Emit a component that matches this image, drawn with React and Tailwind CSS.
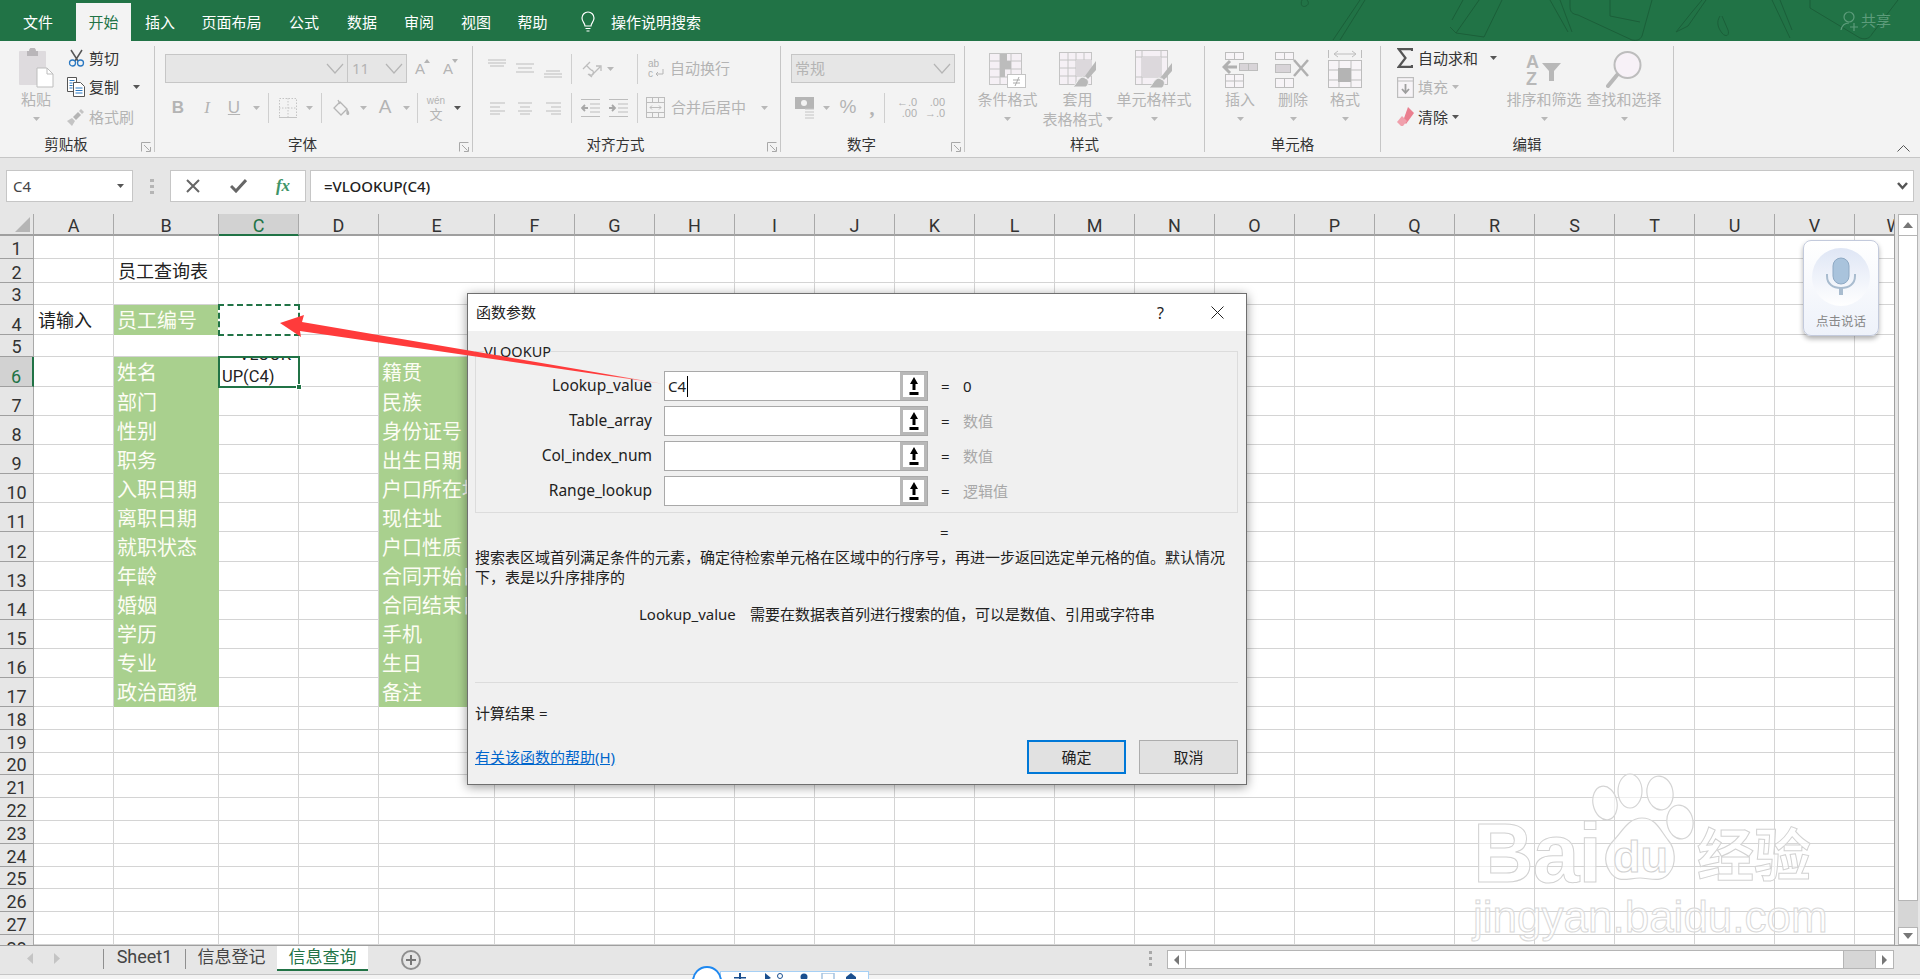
import React from 'react';

const tabs = ['文件', '开始', '插入', '页面布局', '公式', '数据', '审阅', '视图', '帮助'];
const tabBoxes = ['w-[76px]', 'w-[55px]', 'w-[58px]', 'w-[85px]', 'w-[60px]', 'w-[56px]', 'w-[58px]', 'w-[56px]', 'w-[57px]'];

const columns = ['A', 'B', 'C', 'D', 'E', 'F', 'G', 'H', 'I', 'J', 'K', 'L', 'M', 'N', 'O', 'P', 'Q', 'R', 'S', 'T', 'U', 'V', 'W'];
const rowNumbers = Array.from({ length: 28 }, (_, i) => i + 1);

const leftFields = ['姓名', '部门', '性别', '职务', '入职日期', '离职日期', '就职状态', '年龄', '婚姻', '学历', '专业', '政治面貌'];
const rightFields = ['籍贯', '民族', '身份证号', '出生日期', '户口所在地', '现住址', '户口性质', '合同开始日期', '合同结束日期', '手机', '生日', '备注'];

function Caret({ dark = false }) {
  return (
    <svg className="w-[7px] h-[4px] shrink-0" viewBox="0 0 7 4">
      <path d="M0 0h7L3.5 4z" fill={dark ? '#555' : '#b8b8b8'} />
    </svg>
  );
}

function Launcher() {
  return (
    <svg className="w-[10px] h-[10px]" viewBox="0 0 10 10" fill="none" stroke="#a8a8a8">
      <path d="M.5 9.5V.5H9.5" />
      <path d="M3 3l5.5 5.5M5 9.5h4.5V5" />
    </svg>
  );
}

function Chevron() {
  return (
    <svg className="w-[18px] h-[11px]" viewBox="0 0 18 11" fill="none" stroke="#b5b5b5" strokeWidth="1.2">
      <path d="M1 1l8 9 8-9" />
    </svg>
  );
}

function Sep({ className }) {
  return <div className={`w-px h-[30px] bg-[#cfcfcf] shrink-0 ${className}`} />;
}

function Box({ className, children }) {
  return <div className={`flex items-center justify-center shrink-0 ${className}`}>{children}</div>;
}

function Group({ className, label, labelClass, launcher, children }) {
  return (
    <div className={`h-[106px] mt-[5px] border-r border-[#c6c6c6] flex flex-col shrink-0 ${className}`}>
      <div className="h-[89px] -mt-[3px] flex shrink-0">{children}</div>
      <div className={`h-[23px] flex items-center relative pt-[2px] shrink-0 ${labelClass}`}>
        <div className="w-full text-center text-[14.5px] text-[#333]">{label}</div>
        {launcher && <div className="absolute right-[3px] top-[10px]"><Launcher /></div>}
      </div>
    </div>
  );
}

function LargeButton({ className, icon, label, second }) {
  return (
    <div className={`flex flex-col items-center shrink-0 ${className}`}>
      <div className="h-[45px] flex items-end">{icon}</div>
      <div className="h-[20px] mt-[1px] flex items-center text-[15px] text-[#b4b4b4] whitespace-nowrap">{label}</div>
      <div className="h-[20px] flex items-center gap-[3px] text-[15px] text-[#b4b4b4] whitespace-nowrap">
        {second}
        <Caret />
      </div>
    </div>
  );
}

function SmallRow({ icon, label, caret, dark, caretDark, className }) {
  return (
    <div className={`h-[29.5px] flex items-center ${className}`}>
      <div className="w-[22px] flex justify-center shrink-0">{icon}</div>
      <span className={`ml-[2px] text-[15px] whitespace-nowrap ${dark ? 'text-[#333]' : 'text-[#b4b4b4]'}`}>{label}</span>
      {caret && <div className={caret}><Caret dark={caretDark} /></div>}
    </div>
  );
}

function PasteIcon() {
  return (
    <svg className="w-[36px] h-[40px]" viewBox="0 0 36 40">
      <rect x="1" y="3" width="27" height="34" rx="1" fill="#dedbde" />
      <path d="M9 3h2a3.5 3.5 0 0 1 7 0h2v5H9z" fill="#b9b6b9" />
      <path d="M19 20h10l6 6v13H19z" fill="#fff" stroke="#bdbdbd" />
      <path d="M29 20v6h6" fill="none" stroke="#bdbdbd" />
    </svg>
  );
}

function ScissorsIcon() {
  return (
    <svg className="w-[17px] h-[18px]" viewBox="0 0 17 18" fill="none">
      <path d="M3 1l7 11M14 1L7 12" stroke="#555" strokeWidth="1.5" />
      <circle cx="4.5" cy="14" r="3" stroke="#2b79c2" strokeWidth="1.3" />
      <circle cx="12.5" cy="14" r="3" stroke="#2b79c2" strokeWidth="1.3" />
    </svg>
  );
}

function CopyIcon() {
  return (
    <svg className="w-[18px] h-[20px]" viewBox="0 0 18 20" fill="none" stroke="#555">
      <path d="M.5.5h9v14h-9z" fill="#fff" />
      <path d="M6.5 5.5h7l4 4v10h-11z" fill="#fff" />
      <path d="M2.5 3.5h5M2.5 6h3M2.5 8.5h3M2.5 11h3M8.5 11h7M8.5 13.5h7M8.5 16h7" stroke="#2b79c2" />
    </svg>
  );
}

function BrushIcon() {
  return (
    <svg className="w-[18px] h-[18px]" viewBox="0 0 18 18" fill="#c4c4c4">
      <path d="M11 4l3 3-5 5-3-3z" fill="#b4b4b4" />
      <path d="M12 3l2-2 3 3-2 2z" />
      <path d="M5 10l3 3-3 5-5-5z" />
    </svg>
  );
}

function AlignLines({ widths }) {
  return (
    <svg className="w-[18px] h-[14px]" viewBox="0 0 18 14" stroke="#bdbdbd" strokeWidth="1.2">
      <path d={widths} />
    </svg>
  );
}

function OrientIcon() {
  return (
    <svg className="w-[20px] h-[18px]" viewBox="0 0 20 18" fill="none" stroke="#bdbdbd" strokeWidth="1.3">
      <path d="M1 9l7-7M4 5l5 5M6 14l4 3M9 10c2 0 3 2 2 4s-3 1-4 0" />
      <path d="M10 15l8-8M14 6h5v5" />
    </svg>
  );
}

function IndentIcon({ reverse }) {
  return (
    <svg className="w-[19px] h-[20px]" viewBox="0 0 19 20" fill="none" stroke="#bdbdbd" strokeWidth="1.2">
      <path d="M0 1.5h19M0 18.5h19M9 6h10M9 10h10M9 14h10" />
      {reverse ? <path d="M7 10H1M4 7l-3 3 3 3" stroke="#a8a8a8" strokeWidth="1.8" /> : <path d="M0 10h6M3 7l3 3-3 3" stroke="#a8a8a8" strokeWidth="1.8" />}
    </svg>
  );
}

function BorderIcon() {
  return (
    <svg className="w-[18px] h-[20px]" viewBox="0 0 18 20" fill="none" stroke="#c4c4c4" strokeDasharray="1.5 1.5">
      <rect x=".5" y=".5" width="17" height="19" />
      <path d="M9 0v20M0 10h18" />
      <path d="M0 19.5h18" strokeDasharray="none" />
    </svg>
  );
}

function BucketIcon() {
  return (
    <svg className="w-[18px] h-[20px]" viewBox="0 0 18 20" fill="none" stroke="#b5b5b5" strokeWidth="1.3">
      <path d="M8 4l7 7-6 6-7-7z" />
      <path d="M6 2l2 4" />
      <path d="M15 12c1.5 2 2 3 1.5 4s-2 0-1.5-1z" fill="#b5b5b5" />
    </svg>
  );
}

function GrowFont({ up }) {
  return (
    <div className="relative w-[15px] h-[20px] text-[15px] leading-[20px] text-[#b4b4b4] font-['Liberation_Sans']">
      A
      <svg className="absolute left-[9px] top-0 w-[6px] h-[4px]" viewBox="0 0 6 4">
        <path d={up ? 'M3 0l3 4H0z' : 'M0 0h6L3 4z'} fill="#b4b4b4" />
      </svg>
    </div>
  );
}

function WrapIcon() {
  return (
    <div className="relative w-[16px] h-[20px] text-[10px] leading-[10px] text-[#b0b0b0] font-['Liberation_Sans']">
      <div>ab</div>
      <div>c</div>
      <svg className="absolute left-[7px] top-[10px] w-[9px] h-[9px]" viewBox="0 0 9 9" fill="none" stroke="#b5b5b5">
        <path d="M8 0v5H1M3 3L1 5l2 2" />
      </svg>
    </div>
  );
}

function MergeIcon() {
  return (
    <svg className="w-[19px] h-[21px]" viewBox="0 0 19 21" fill="none" stroke="#bdbdbd">
      <rect x=".5" y=".5" width="18" height="20" />
      <path d="M0 5.5h19M0 15.5h19M6.5 0v5M12.5 0v5M6.5 16v5M12.5 16v5" />
      <path d="M4 10.5h11M6 8.5l-2 2 2 2M13 8.5l2 2-2 2" />
    </svg>
  );
}

function MoneyIcon() {
  return (
    <svg className="w-[20px] h-[22px]" viewBox="0 0 20 22">
      <rect x="0" y="0" width="19" height="12" fill="#b5b5b5" />
      <circle cx="9" cy="6" r="3" fill="#f3f3f3" />
      <path d="M10 12h9M10 15h9M10 18h9M10 21h9" stroke="#c4c4c4" />
    </svg>
  );
}

function DecimalIcon({ top, bottom }) {
  return (
    <div className="flex flex-col items-end text-[11px] leading-[11px] text-[#b0b0b0] font-['Liberation_Sans'] whitespace-nowrap">
      <span>{top}</span>
      <span>{bottom}</span>
    </div>
  );
}

function CondFormatIcon() {
  return (
    <svg className="w-[38px] h-[35px]" viewBox="0 0 38 35" fill="#f5f0f5" stroke="#c4c4c4">
      <rect x=".5" y=".5" width="32" height="31" />
      <path d="M11 0v32M22 0v32M0 8h33M0 16h33M0 24h33" />
      <rect x="11" y="1" width="7" height="7" fill="#bcbcbc" stroke="none" />
      <rect x="11" y="8" width="11" height="8" fill="#bcbcbc" stroke="none" />
      <rect x="11" y="16" width="5" height="8" fill="#bcbcbc" stroke="none" />
      <rect x="18.5" y="21.5" width="18" height="13" fill="#fff" />
      <path d="M24 27h7M24 30h7M30 24l-4 9" fill="none" stroke="#aaa" />
    </svg>
  );
}

function TableFormatIcon() {
  return (
    <svg className="w-[38px] h-[36px]" viewBox="0 0 38 36" fill="#f5f0f5" stroke="#c4c4c4">
      <rect x=".5" y=".5" width="32" height="32" />
      <path d="M9 0v33M17 0v33M25 0v33M0 8h33M0 16h33M0 24h33" />
      <rect x="17" y="8" width="16" height="16" fill="#dcd8dc" stroke="none" />
      <path d="M37 9L26 24l3 3 8-9z" fill="#b8b8b8" stroke="none" />
      <path d="M24 25c-5 1-5 5-10 10h13c3-3 3-6 1-8z" fill="#b8b8b8" stroke="#f3f3f3" />
    </svg>
  );
}

function CellStyleIcon() {
  return (
    <svg className="w-[38px] h-[38px]" viewBox="0 0 38 38" fill="#f5f0f5" stroke="#c4c4c4">
      <rect x=".5" y=".5" width="32" height="34" />
      <path d="M7 0v35M26 0v35M0 7h33M0 27h33" />
      <rect x="7" y="7" width="19" height="20" fill="#dcd8dc" stroke="none" />
      <path d="M37 13L26 27l3 3 8-9z" fill="#b8b8b8" stroke="none" />
      <path d="M24 28c-5 1-5 5-10 10h13c3-3 3-6 1-8z" fill="#b8b8b8" stroke="#f3f3f3" />
    </svg>
  );
}

function InsertCellsIcon() {
  return (
    <svg className="w-[36px] h-[36px]" viewBox="0 0 36 36" fill="#f7f4f7" stroke="#bdbdbd">
      <rect x="3.5" y=".5" width="18" height="7" />
      <path d="M12.5 0v8" />
      <rect x="3.5" y="22.5" width="18" height="13" />
      <path d="M12.5 22v14M3 29h18" />
      <rect x="17.5" y="11.5" width="18" height="7" fill="#d8d4d8" />
      <path d="M26.5 11v8" />
      <path d="M15 15H2M8 9l-6 6 6 6" fill="none" stroke="#b0b0b0" strokeWidth="3" />
    </svg>
  );
}

function DeleteCellsIcon() {
  return (
    <svg className="w-[36px] h-[36px]" viewBox="0 0 36 36" fill="#f7f4f7" stroke="#bdbdbd">
      <rect x=".5" y=".5" width="18" height="7" />
      <rect x=".5" y="26.5" width="18" height="9" />
      <path d="M9.5 0v8M9.5 26v10" />
      <rect x=".5" y="12.5" width="15" height="8" fill="#d8d4d8" />
      <path d="M19 8l14 16M33 8L19 24" fill="none" stroke="#b0b0b0" strokeWidth="2.5" />
    </svg>
  );
}

function FormatCellsIcon() {
  return (
    <svg className="w-[34px] h-[38px]" viewBox="0 0 34 38" fill="#f7f4f7" stroke="#bdbdbd">
      <path d="M7 4h20M10 1L6 4l4 3M24 1l4 3-4 3M.5 0v8M33.5 0v8" fill="none" />
      <rect x=".5" y="10.5" width="33" height="27" />
      <path d="M11 10v27M23 10v27M0 20h34M0 30h34" />
      <rect x="10" y="18" width="13" height="14" fill="#b4b4b4" stroke="none" />
    </svg>
  );
}

function SigmaIcon() {
  return (
    <svg className="w-[16px] h-[20px]" viewBox="0 0 16 20" fill="none" stroke="#555" strokeWidth="2.2">
      <path d="M15 3V1.2H1.8L8.5 10 1.8 18.8H15V17" />
    </svg>
  );
}

function FillIcon() {
  return (
    <svg className="w-[17px] h-[21px]" viewBox="0 0 17 21" fill="#f7f4f7" stroke="#bdbdbd">
      <rect x=".5" y=".5" width="16" height="20" strokeWidth="1.4" />
      <path d="M0 4h17" />
      <path d="M8.5 7v9M5 12l3.5 4 3.5-4" fill="none" stroke="#9e9e9e" strokeWidth="1.8" />
    </svg>
  );
}

function EraserIcon() {
  return (
    <svg className="w-[17px] h-[20px]" viewBox="0 0 17 20">
      <path d="M11 0l6 6-8 11-3-3z" fill="#ea7f8f" />
      <path d="M5 9l5 5-4 5-2 0-4-4z" fill="#f0a0ac" />
    </svg>
  );
}

function SortIcon() {
  return (
    <div className="relative w-[36px] h-[34px] text-[18px] leading-[17px] font-bold text-[#b8b8b8] font-['Liberation_Sans']">
      <div>A</div>
      <div>Z</div>
      <svg className="absolute left-[16px] top-[9px] w-[19px] h-[18px]" viewBox="0 0 19 18" fill="#b8b8b8">
        <path d="M0 0h19l-7 8v10H7V8z" />
      </svg>
    </div>
  );
}

function FindIcon() {
  return (
    <svg className="w-[36px] h-[37px]" viewBox="0 0 36 37" fill="none">
      <circle cx="21.5" cy="14" r="13" fill="#f7f1f7" stroke="#bdbdbd" strokeWidth="2" />
      <path d="M11 24L2 35" stroke="#b8b8b8" strokeWidth="4" strokeLinecap="round" />
    </svg>
  );
}

function TitleSketch() {
  return (
    <svg className="absolute left-[1280px] top-0 w-[640px] h-[41px]" viewBox="0 0 640 41" fill="none" stroke="#1b5f39" strokeWidth="1">
      <path d="M53 40L80 0M60 40L85 0M22 0c-2 4 0 8 4 6s2-5 1-6" />
      <path d="M172 20L183 0M170 27l6 6 28-40M176 33l28 4 18-37" />
      <path d="M270 0l18 32M280 0l12 32" />
      <path d="M290 0v6c0 6 2 8 8 9l54 25c5 1 8 0 10-4l10-36" />
      <path d="M330 16V0M330 16l30 6" />
      <path d="M396 32l16-20 10-12M396 32l12-6 18-26" />
      <path d="M440 16c-4 6-2 12 2 17s8 2 6-3l-6-14" />
      <path d="M492 0l18 38M500 0l12 30" />
      <path d="M530 0v8l50 30c6 2 10 0 12-4l26-34" />
    </svg>
  );
}

function Ribbon() {
  return (
    <div className="h-[117px] bg-[#f3f3f3] border-b border-[#c6c6c6] flex shrink-0 relative">
      <Group className="w-[155px]" labelClass="pr-[22px]" label="剪贴板" launcher>
        <div className="ml-[16px] w-[40px]">
          <LargeButton className="w-[40px]" icon={<PasteIcon />} label="粘贴" />
        </div>
        <div className="ml-[9px]">
          <SmallRow icon={<ScissorsIcon />} label="剪切" dark />
          <SmallRow icon={<CopyIcon />} label="复制" dark caret="ml-[14px]" caretDark />
          <SmallRow icon={<BrushIcon />} label="格式刷" />
        </div>
      </Group>

      <Group className="w-[318px]" labelClass="pr-[22px]" label="字体" launcher>
        <div className="pl-[10px] pt-[11px]">
          <div className="flex items-center h-[29px]">
            <div className="w-[183px] h-[29px] bg-[#e6e6e6] border border-[#c6c6c6] flex items-center justify-end pr-[3px]"><Chevron /></div>
            <div className="w-[59px] h-[29px] bg-[#e6e6e6] border border-l-0 border-[#c6c6c6] flex items-center justify-between pl-[4px] pr-[3px] text-[15px] text-[#b4b4b4]">11<Chevron /></div>
            <div className="ml-[8px]"><GrowFont up /></div>
            <div className="ml-[13px]"><GrowFont /></div>
          </div>
          <div className="flex items-center h-[33px] mt-[8px] text-[#b4b4b4] text-[17px] font-['Liberation_Sans']">
            <Box className="w-[26px] font-bold">B</Box>
            <Box className="w-[32px] italic font-['Liberation_Serif']">I</Box>
            <Box className="w-[22px] underline">U</Box>
            <Box className="w-[22px]"><Caret /></Box>
            <Sep className="ml-[1px]" />
            <Box className="w-[37px]"><BorderIcon /></Box>
            <Caret />
            <Sep className="ml-[8px]" />
            <Box className="w-[38px]"><BucketIcon /></Box>
            <Caret />
            <Box className="w-[28px] text-[19px] ml-[4px]">A</Box>
            <Box className="w-[14px]"><Caret /></Box>
            <Sep className="ml-[4px]" />
            <Box className="w-[36px] flex-col text-[10px] leading-[11px]"><span>wén</span><span className="text-[13px] leading-[15px] font-['Noto_Sans_CJK_SC']">文</span></Box>
            <Caret dark />
          </div>
        </div>
      </Group>

      <Group className="w-[308px]" labelClass="pr-[22px]" label="对齐方式" launcher>
        <div className="pt-[11px] pl-[15px]">
          <div className="flex items-center h-[29px]">
            <Box className="w-[18px] -mt-[8px]"><AlignLines widths="M0 2h18M0 5h18M2 8h14" /></Box>
            <Box className="w-[18px] ml-[10px]"><AlignLines widths="M0 2h18M2 6h14M0 10h18" /></Box>
            <Box className="w-[18px] ml-[10px] mt-[8px]"><AlignLines widths="M2 5h14M0 8h18M0 11h18" /></Box>
            <Sep className="ml-[9px]" />
            <Box className="w-[20px] ml-[10px]"><OrientIcon /></Box>
            <Box className="w-[8px] ml-[4px]"><Caret /></Box>
            <Sep className="ml-[23px]" />
            <Box className="w-[16px] ml-[10px]"><WrapIcon /></Box>
            <span className="ml-[6px] text-[15px] text-[#b4b4b4]">自动换行</span>
          </div>
          <div className="flex items-center h-[33px] mt-[8px]">
            <Box className="w-[18px]"><AlignLines widths="M2 2h15M2 6h10M2 10h15M2 13h10" /></Box>
            <Box className="w-[18px] ml-[10px]"><AlignLines widths="M2 2h14M4 6h10M2 10h14M4 13h10" /></Box>
            <Box className="w-[18px] ml-[10px]"><AlignLines widths="M2 2h15M7 6h10M2 10h15M7 13h10" /></Box>
            <Sep className="ml-[9px]" />
            <Box className="w-[19px] ml-[9px]"><IndentIcon reverse /></Box>
            <Box className="w-[19px] ml-[9px]"><IndentIcon /></Box>
            <Sep className="ml-[9px]" />
            <Box className="w-[19px] ml-[8px]"><MergeIcon /></Box>
            <span className="ml-[6px] text-[15px] text-[#b4b4b4]">合并后居中</span>
            <Box className="w-[8px] ml-[14px]"><Caret /></Box>
          </div>
        </div>
      </Group>

      <Group className="w-[184px]" labelClass="pr-[22px]" label="数字" launcher>
        <div className="pt-[11px] pl-[10px]">
          <div className="w-[164px] h-[29px] bg-[#e6e6e6] border border-[#c6c6c6] flex items-center justify-between pl-[3px] pr-[3px] text-[15px] text-[#b4b4b4]">常规<Chevron /></div>
          <div className="flex items-center h-[33px] mt-[8px] text-[#b4b4b4]">
            <Box className="w-[20px] ml-[4px]"><MoneyIcon /></Box>
            <Box className="w-[7px] ml-[8px]"><Caret /></Box>
            <Box className="w-[18px] ml-[9px] text-[19px] font-['Liberation_Sans']">%</Box>
            <Box className="w-[10px] ml-[10px] text-[20px] font-bold font-['Liberation_Serif']">,</Box>
            <Sep className="ml-[7px]" />
            <Box className="w-[22px] ml-[11px]"><DecimalIcon top="←.0" bottom=".00" /></Box>
            <Box className="w-[22px] ml-[6px]"><DecimalIcon top=".00" bottom="→.0" /></Box>
          </div>
        </div>
      </Group>

      <Group className="w-[240px]" label="样式">
        <LargeButton className="w-[75px] ml-[5px]" icon={<CondFormatIcon />} label="条件格式" />
        <LargeButton className="w-[75px] -ml-[5px]" icon={<TableFormatIcon />} label="套用" second="表格格式" />
        <LargeButton className="w-[80px] -ml-[1px]" icon={<CellStyleIcon />} label="单元格样式" />
      </Group>

      <Group className="w-[176px]" label="单元格">
        <LargeButton className="w-[50px] ml-[10px]" icon={<InsertCellsIcon />} label="插入" />
        <LargeButton className="w-[50px] ml-[3px]" icon={<DeleteCellsIcon />} label="删除" />
        <LargeButton className="w-[50px] ml-[2px]" icon={<FormatCellsIcon />} label="格式" />
      </Group>

      <Group className="w-[293px]" label="编辑">
        <div className="w-[140px] pl-[13px] shrink-0">
          <SmallRow icon={<SigmaIcon />} label="自动求和" dark caret="ml-[12px]" caretDark />
          <SmallRow icon={<FillIcon />} label="填充" caret="ml-[4px]" />
          <SmallRow icon={<EraserIcon />} label="清除" dark caret="ml-[4px]" caretDark />
        </div>
        <LargeButton className="w-[80px] -ml-[17px]" icon={<SortIcon />} label="排序和筛选" />
        <LargeButton className="w-[80px] ml-0" icon={<FindIcon />} label="查找和选择" />
      </Group>

      <svg className="absolute right-[10px] bottom-[5px] w-[13px] h-[7px]" viewBox="0 0 13 7" fill="none" stroke="#555">
        <path d="M.5 6.5l6-6 6 6" />
      </svg>
    </div>
  );
}

function FormulaBar() {
  return (
    <div className="h-[56px] flex items-center shrink-0 text-[15px]">
      <div className="ml-[6px] w-[127px] h-[32px] bg-white border border-[#c6c6c6] flex items-center justify-between pl-[6px] pr-[8px] text-[#444]">
        C4
        <Caret dark />
      </div>
      <div className="w-[37px] flex flex-col items-center gap-[3px] shrink-0">
        <div className="w-[4px] h-[3px] bg-[#b5b5b5]" />
        <div className="w-[4px] h-[3px] bg-[#b5b5b5]" />
        <div className="w-[4px] h-[3px] bg-[#b5b5b5]" />
      </div>
      <div className="w-[136px] h-[32px] bg-white border border-[#c6c6c6] flex items-center shrink-0">
        <Box className="w-[44px]">
          <svg className="w-[14px] h-[14px]" viewBox="0 0 14 14" fill="none" stroke="#666" strokeWidth="2"><path d="M1 1l12 12M13 1L1 13" /></svg>
        </Box>
        <Box className="w-[46px]">
          <svg className="w-[17px] h-[14px]" viewBox="0 0 17 14" fill="none" stroke="#666" strokeWidth="3"><path d="M1 7l5 5L16 1" /></svg>
        </Box>
        <Box className="w-[44px] text-[17px] italic font-bold text-[#3f9468] font-['Liberation_Serif']">fx</Box>
      </div>
      <div className="ml-[4px] w-[1604px] h-[32px] bg-white border border-[#c6c6c6] flex items-center justify-between pl-[13px] pr-[5px] text-[#222] font-medium">
        =VLOOKUP(C4)
        <svg className="w-[11px] h-[8px]" viewBox="0 0 11 8" fill="none" stroke="#555" strokeWidth="2.5"><path d="M1 1l4.5 5L10 1" /></svg>
      </div>
    </div>
  );
}

function SheetCell({ row, col }) {
  const base = 'bg-white border-r border-b border-[#d4d4d4]';
  const green = "bg-[#a9d08e] text-[#fdfdf4] text-[20px] pl-[3px] flex items-center whitespace-nowrap overflow-hidden font-['Noto_Sans_CJK_SC']";
  const plain = "bg-white border-r border-b border-[#d4d4d4] text-[18px] text-[#222] flex items-center whitespace-nowrap font-['Noto_Sans_CJK_SC']";

  if (col === 'B' && row === 4) return <div className={green}>员工编号</div>;
  if (col === 'B' && row >= 6 && row <= 17) return <div className={green}>{leftFields[row - 6]}</div>;
  if (col === 'E' && row >= 6 && row <= 17) return <div className={green}>{rightFields[row - 6]}</div>;
  if (col === 'B' && row === 2) return <div className={`${plain} pl-[4px]`}>员工查询表</div>;
  if (col === 'A' && row === 4) return <div className={`${plain} pl-[4px]`}>请输入</div>;
  if (col === 'C' && row === 4) return <div className="bg-white border-2 border-dashed border-[#217346] -m-px z-10" />;
  if (col === 'C' && row === 6) {
    return (
      <div className="relative z-10 -m-px bg-white border-2 border-[#217346]">
        <div className="h-full overflow-hidden flex flex-col justify-end pl-[2px] text-[16.5px] text-[#222] font-['Roboto']">
          <span className="pl-[8px] h-[20px] leading-[20px] shrink-0">=VLOOK</span>
          <span className="-mb-[3px] h-[24px] leading-[24px] shrink-0">UP(C4)</span>
        </div>
        <div className="absolute -right-[4px] -bottom-[4px] w-[6px] h-[6px] bg-[#217346] border border-white" />
      </div>
    );
  }
  return <div className={base} />;
}

function Sheet() {
  return (
    <div className="relative h-[731px] shrink-0 overflow-hidden">
      <div className="w-[1894px] h-[731px] grid grid-cols-[34px_80px_105px_80px_80px_116px_repeat(17,80px)_80px] grid-rows-[22px_23px_24px_22px_30px_22px_30px_repeat(11,29.1px)_repeat(10,22.8px)_10px] font-['Roboto'] overflow-hidden">
        <div className="bg-[#e6e6e6] border-r border-b-2 border-r-[#a9a9a9] border-b-[#9f9f9f] flex items-end justify-end pr-[3px] pb-[2px]">
          <svg className="w-[15px] h-[15px]" viewBox="0 0 15 15"><path d="M15 0v15H0z" fill="#b5b5b5" /></svg>
        </div>
        {columns.map((c) => (
          <div
            key={c}
            className={
              c === 'C'
                ? 'bg-[#d2d2d2] border-r border-r-[#a9a9a9] border-b-2 border-b-[#217346] text-[#217346] text-[18px] leading-[24px] text-center'
                : 'bg-[#e6e6e6] border-r border-r-[#a9a9a9] border-b-2 border-b-[#9f9f9f] text-[#333] text-[18px] leading-[24px] text-center'
            }
          >
            {c}
          </div>
        ))}
        {rowNumbers.map((r) => (
          <React.Fragment key={r}>
            <div
              className={
                r === 6
                  ? 'bg-[#d2d2d2] border-r-2 border-r-[#217346] border-b border-b-[#9f9f9f] text-[#217346] text-[18px] leading-[18px] flex items-end justify-center'
                  : r === 28
                    ? 'bg-[#e6e6e6] border-r border-r-[#a9a9a9] text-[#333] text-[18px] leading-[18px] pt-[5px] overflow-hidden flex items-start justify-center'
                    : 'bg-[#e6e6e6] border-r border-r-[#a9a9a9] border-b border-b-[#9f9f9f] text-[#333] text-[18px] leading-[18px] flex items-end justify-center'
              }
            >
              {r}
            </div>
            {columns.map((c) => (
              <SheetCell key={c} row={r} col={c} />
            ))}
          </React.Fragment>
        ))}
      </div>
      <div className="absolute right-0 top-0 bottom-0 w-[26px] bg-[#e6e6e6] border-l border-[#9f9f9f] pl-[3px] pr-[2px] flex flex-col">
        <div className="h-[22px] bg-white border border-[#b5b5b5] flex items-center justify-center shrink-0">
          <svg className="w-[10px] h-[6px]" viewBox="0 0 10 6"><path d="M5 0l5 6H0z" fill="#777" /></svg>
        </div>
        <div className="h-[665px] bg-white border-x border-b border-[#b5b5b5] shrink-0" />
        <div className="flex-1 bg-[#d6d6d6]" />
        <div className="h-[18px] bg-white border border-[#b5b5b5] flex items-center justify-center shrink-0">
          <svg className="w-[10px] h-[6px]" viewBox="0 0 10 6"><path d="M0 0h10L5 6z" fill="#777" /></svg>
        </div>
      </div>
    </div>
  );
}

function SheetTabs() {
  return (
    <div className="h-[29px] border-t border-[#9f9f9f] bg-[#e6e6e6] flex shrink-0 relative">
      <div className="flex items-center w-[103px] h-[24px] pl-[27px] gap-[21px] shrink-0">
        <svg className="w-[6px] h-[11px]" viewBox="0 0 6 11"><path d="M6 0v11L0 5.5z" fill="#c4c4c4" /></svg>
        <svg className="w-[6px] h-[11px]" viewBox="0 0 6 11"><path d="M0 0v11l6-5.5z" fill="#c4c4c4" /></svg>
      </div>
      <div className="h-[20px] mt-[3px] w-px bg-[#8f8f8f] shrink-0" />
      <div className="w-[81px] h-[24px] pb-[4px] flex items-center justify-center text-[18px] text-[#444] font-['Roboto'] shrink-0">Sheet1</div>
      <div className="h-[20px] mt-[3px] w-px bg-[#8f8f8f] shrink-0" />
      <div className="w-[91px] h-[24px] pb-[4px] flex items-center justify-center text-[17px] text-[#444] font-['Noto_Sans_CJK_SC'] shrink-0">信息登记</div>
      <div className="w-[91px] h-[25px] pb-[3px] bg-white border-b-2 border-[#217346] flex items-center justify-center text-[17px] text-[#217346] font-['Noto_Sans_CJK_SC'] shrink-0">信息查询</div>
      <div className="ml-[33px] mt-[4px] w-[20px] h-[20px] rounded-full border-2 border-[#8f8f8f] flex items-center justify-center text-[#777] shrink-0">
        <svg className="w-[10px] h-[10px]" viewBox="0 0 10 10" stroke="#777" strokeWidth="2"><path d="M5 0v10M0 5h10" /></svg>
      </div>
      <div className="ml-[728px] mt-[5px] flex flex-col gap-[3px] shrink-0">
        <div className="w-[3px] h-[3px] bg-[#a8a8a8]" />
        <div className="w-[3px] h-[3px] bg-[#a8a8a8]" />
        <div className="w-[3px] h-[3px] bg-[#a8a8a8]" />
      </div>
      <div className="ml-[15px] mt-[4px] w-[727px] h-[19px] border border-[#b5b5b5] bg-[#d6d6d6] flex shrink-0">
        <div className="w-[18px] bg-white border-r border-[#b5b5b5] flex items-center justify-center">
          <svg className="w-[5px] h-[10px]" viewBox="0 0 5 10"><path d="M5 0v10L0 5z" fill="#777" /></svg>
        </div>
        <div className="w-[658px] bg-white border-r border-[#b5b5b5]" />
        <div className="flex-1" />
        <div className="w-[18px] bg-white border-l border-[#b5b5b5] flex items-center justify-center">
          <svg className="w-[5px] h-[10px]" viewBox="0 0 5 10"><path d="M0 0v10l5-5z" fill="#777" /></svg>
        </div>
      </div>
    </div>
  );
}

function ParamRow({ label, hint, value, children }) {
  return (
    <div className="flex items-center h-[30px]">
      <div className="w-[176px] text-right text-[15.5px] text-[#222]">{label}</div>
      <div className="ml-[12px] w-[264px] h-[30px] flex border border-[#a9a9a9] bg-white">
        <div className="flex-1 pl-[3px] flex items-center text-[15px] text-[#222] relative">{children}</div>
        <div className="w-[27px] border-[3px] border-[#b8b8b8] flex items-center justify-center">
          <svg className="w-[10px] h-[18px]" viewBox="0 0 10 18" fill="#000">
            <path d="M5 0l4 7H6.5v6h-3V7H1z" />
            <rect x="0.5" y="15" width="9" height="3" />
          </svg>
        </div>
      </div>
      <div className="ml-[13px] w-[10px] text-[15px] text-[#222]">=</div>
      <div className={`ml-[12px] text-[15px] ${value ? 'text-[#222]' : 'text-[#a8a8a8]'}`}>{value || hint}</div>
    </div>
  );
}

function FunctionDialog() {
  return (
    <div className="absolute left-[467px] top-[293px] w-[780px] h-[492px] border border-[#6f6f6f] shadow-[0_2px_10px_rgba(0,0,0,0.4)] flex flex-col text-[15px] z-20">
      <div className="h-[37px] bg-white flex items-center pl-[8px] text-[#222] shrink-0">
        <span>函数参数</span>
        <span className="ml-[621px] text-[16px]">?</span>
        <svg className="ml-[47px] w-[13px] h-[13px]" viewBox="0 0 13 13" fill="none" stroke="#222"><path d="M.5.5l12 12M12.5.5l-12 12" /></svg>
      </div>
      <div className="flex-1 bg-[#f0f0f0] pl-[7px] pr-[8px] text-[#222]">
        <div className="relative mt-[20px] h-[162px] border border-[#dcdcdc] pt-[19px] flex flex-col gap-[5px]">
          <div className="absolute -top-[11px] left-[8px] bg-[#f0f0f0] text-[14.5px] leading-[20px]">VLOOKUP</div>
          <ParamRow label="Lookup_value" value="0">
            C4
            <div className="w-px h-[21px] bg-black ml-[1px]" />
          </ParamRow>
          <ParamRow label="Table_array" hint="数值" />
          <ParamRow label="Col_index_num" hint="数值" />
          <ParamRow label="Range_lookup" hint="逻辑值" />
        </div>
        <div className="h-[20px] mt-[9px] pl-[465px] leading-[20px]">=</div>
        <div className="mt-[5px] leading-[20px] w-[760px]">搜索表区域首列满足条件的元素，确定待检索单元格在区域中的行序号，再进一步返回选定单元格的值。默认情况下，表是以升序排序的</div>
        <div className="mt-[17px] h-[20px] leading-[20px] pl-[164px] flex">
          <span className="w-[111px] shrink-0">Lookup_value</span>
          <span>需要在数据表首列进行搜索的值，可以是数值、引用或字符串</span>
        </div>
        <div className="mt-[58px] h-px bg-[#dcdcdc]" />
        <div className="mt-[20px] h-[20px] leading-[20px]">计算结果 =</div>
        <div className="mt-[17px] flex items-center justify-between">
          <a className="text-[#0066cc] underline">有关该函数的帮助(H)</a>
          <div className="flex gap-[13px]">
            <div className="w-[99px] h-[34px] border-2 border-[#0078d7] bg-[#e1e1e1] flex items-center justify-center">确定</div>
            <div className="w-[99px] h-[34px] border border-[#adadad] bg-[#e1e1e1] flex items-center justify-center">取消</div>
          </div>
        </div>
      </div>
    </div>
  );
}

function RedArrow() {
  return (
    <svg className="absolute left-0 top-0 w-[1920px] h-[979px] pointer-events-none z-30" viewBox="0 0 1920 979">
      <defs>
        <linearGradient id="arrowFade" x1="280" y1="0" x2="664" y2="0" gradientUnits="userSpaceOnUse">
          <stop offset="0.85" stopColor="#ff3b3b" />
          <stop offset="1" stopColor="#ffb0b0" />
        </linearGradient>
      </defs>
      <path d="M280 323L304 315 302 322 664 384 300 331 301 337z" fill="url(#arrowFade)" />
    </svg>
  );
}

function VoiceWidget() {
  return (
    <div className="absolute left-[1803px] top-[240px] w-[76px] h-[96px] rounded-[8px] border border-[#c3cadc] bg-gradient-to-b from-white to-[#eef2fa] shadow-[0_3px_5px_rgba(0,0,0,0.3)] flex flex-col items-center z-10">
      <div className="mt-[7px] w-[58px] h-[58px] rounded-full bg-gradient-to-b from-[#dfe6f5] to-white flex items-center justify-center">
        <svg className="w-[30px] h-[40px]" viewBox="0 0 30 40" fill="none">
          <rect x="7" y="1" width="16" height="26" rx="8" fill="#a9c3dc" stroke="#8ea9c4" />
          <path d="M1 17v2c0 8 6 12 14 12s14-4 14-12v-2" stroke="#a9bccf" strokeWidth="2" />
          <rect x="13" y="31" width="4" height="7" fill="#a9bccf" />
        </svg>
      </div>
      <div className="mt-[7px] text-[12.5px] leading-[16px] text-[#888] font-['Noto_Sans_CJK_SC']">点击说话</div>
    </div>
  );
}

function Watermark() {
  const outline = "text-white/60 [-webkit-text-stroke:1px_#d2d2d2] font-['Liberation_Sans'] font-bold leading-none";
  return (
    <div className="absolute left-[1473px] top-[773px] w-[350px] h-[170px] pointer-events-none z-10">
      <div className={`absolute left-0 top-[38px] text-[84px] -tracking-[1px] ${outline}`}>Bai</div>
      <svg className="absolute left-[119px] top-0 w-[102px] h-[113px]" viewBox="0 0 102 113" fill="rgba(255,255,255,0.6)" stroke="#d4d4d4" strokeWidth="1.2">
        <ellipse cx="13" cy="30" rx="12" ry="17" transform="rotate(-12 13 30)" />
        <ellipse cx="38" cy="18" rx="12" ry="17" />
        <ellipse cx="68" cy="20" rx="13" ry="17" transform="rotate(-10 68 20)" />
        <ellipse cx="88" cy="49" rx="13" ry="17" transform="rotate(-10 88 49)" />
        <path d="M50 45c14 0 18 12 26 22 8 9 8 24 2 32-8 12-20 6-30 6-12 0-22 6-30-6-8-12-4-24 4-32 8-8 14-22 28-22z" />
      </svg>
      <div className={`absolute left-[140px] top-[61px] text-[45px] ${outline}`}>du</div>
      <div className={`absolute left-[224px] top-[50px] text-[57px] font-['Noto_Sans_CJK_SC'] ${outline}`}>经验</div>
      <div className="absolute left-0 top-[122px] text-[44px] leading-none text-white/60 [-webkit-text-stroke:1px_#d9d9d9] font-['Liberation_Sans'] whitespace-nowrap">jingyan.baidu.com</div>
    </div>
  );
}

function FloatingToolbar() {
  return (
    <div className="absolute left-[692px] top-[966px] h-[13px] flex items-start z-30 overflow-hidden">
      <div className="w-[30px] h-[30px] rounded-full border-2 border-[#1e88f0] bg-white shrink-0 relative z-10" />
      <div className="-ml-[2px] mt-[5px] w-[149px] h-[10px] bg-white border border-[#a6d0f5] shrink-0 flex items-start text-[#1a4f8f]">
        <svg className="ml-[13px] mt-[1px] w-[134px] h-[8px]" viewBox="0 0 134 8" fill="#1a4f8f">
          <path d="M0 4h12v1.5H0zM5 0h2v8H5z" />
          <path d="M31 0l6 5-6 3z" />
          <circle cx="46" cy="3" r="2.5" fill="none" stroke="#1a4f8f" />
          <circle cx="70" cy="4" r="3.5" />
          <rect x="88" y="0" width="12" height="8" fill="none" stroke="#a6c4e0" strokeWidth="1.5" />
          <path d="M112 4l5-4 5 4v4h-10z" />
        </svg>
      </div>
    </div>
  );
}

export default function App() {
  return (
    <div className="relative w-[1920px] h-[979px] overflow-hidden flex flex-col bg-[#e6e6e6] font-['Noto_Sans','Noto_Sans_CJK_SC',sans-serif]">
      <div className="relative h-[41px] bg-[#217346] flex items-end shrink-0 text-[15px] text-white">
        <TitleSketch />
        {tabs.map((t, i) => (
          <div
            key={t}
            className={
              t === '开始'
                ? 'h-[38px] bg-[#f3f3f3] text-[#217346] flex items-center justify-center shrink-0 ' + tabBoxes[i]
                : 'h-[38px] flex items-center justify-center shrink-0 ' + tabBoxes[i]
            }
          >
            {t}
          </div>
        ))}
        <div className="h-[38px] flex items-center ml-[8px] shrink-0">
          <svg className="w-[14px] h-[22px] ml-[12px]" viewBox="0 0 14 22" fill="none" stroke="#fff" strokeWidth="1.2">
            <path d="M4 15c0-3-3-4-3-8a6 6 0 0 1 12 0c0 4-3 5-3 8z" />
            <path d="M4.5 17.5h5M5.5 20h3" />
          </svg>
          <span className="ml-[16px]">操作说明搜索</span>
        </div>
        <div className="absolute left-[1840px] top-0 h-[41px] flex items-center gap-[1px] text-[#5d9c7b]">
          <svg className="w-[20px] h-[22px]" viewBox="0 0 20 22" fill="none" stroke="#5d9c7b" strokeWidth="1.2">
            <circle cx="9" cy="7" r="5" />
            <path d="M1 20c1-5 4-7 8-7M14 13v8M10 17h8" />
          </svg>
          <span>共享</span>
        </div>
      </div>

      <Ribbon />
      <FormulaBar />
      <Sheet />
      <SheetTabs />
      <div className="h-[5px] bg-[#f3f3f3] border-t border-[#c6c6c6] shrink-0" />

      <VoiceWidget />
      <Watermark />
      <FunctionDialog />
      <RedArrow />
      <FloatingToolbar />
    </div>
  );
}
